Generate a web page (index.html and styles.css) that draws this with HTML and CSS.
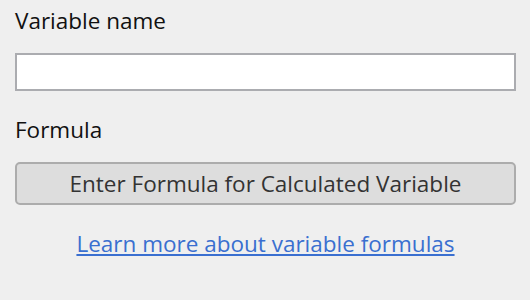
FILE: index.html
```html
<!DOCTYPE html>
<html lang="en">
<head>
  <meta charset="UTF-8" />
  <meta name="viewport" content="width=device-width, initial-scale=1" />
  <title>Calculated Variable</title>
  <link rel="stylesheet" href="styles.css">
</head>
<body>
  <form class="var-form" id="varForm" novalidate>
    <div class="form-group">
      <label for="varName">Variable name</label>
      <input type="text" id="varName" name="varName" />
    </div>

    <div class="form-group">
      <label>Formula</label>
      <button type="button" class="formula-btn">Enter Formula for Calculated Variable</button>
    </div>

    <div class="learn-more">
      <a href="#">Learn more about variable formulas</a>
    </div>
  </form>
</body>
</html>
```

FILE: styles.css
```css
html, body {
  margin: 0;
  background: #efefef;
}
body {
  font-family: 'Open Sans', sans-serif;
  font-size: 22.5px;
  color: #111;
  padding: 6px 14px 0 15px;
}
.var-form {
  display: flex;
  flex-direction: column;
}
.form-group {
  display: flex;
  flex-direction: column;
  margin-bottom: 24px;
}
label {
  display: block;
  margin-bottom: 17px;
  line-height: 30px;
}
input {
  box-sizing: border-box;
  height: 38px;
  width: 100%;
  border: 2px solid #abacb0;
  background: white;
  font: inherit;
  padding: 0 8px;
  margin: 0;
}
input:focus {
  outline: none;
}
.formula-btn {
  box-sizing: border-box;
  height: 43px;
  width: 100%;
  margin: 0;
  border: 2px solid #acacac;
  border-radius: 5px;
  background: #dddddd;
  color: #333;
  font: inherit;
  cursor: pointer;
}
.learn-more {
  text-align: center;
  line-height: 30px;
}
.learn-more a {
  color: #3a6fd0;
}
```
